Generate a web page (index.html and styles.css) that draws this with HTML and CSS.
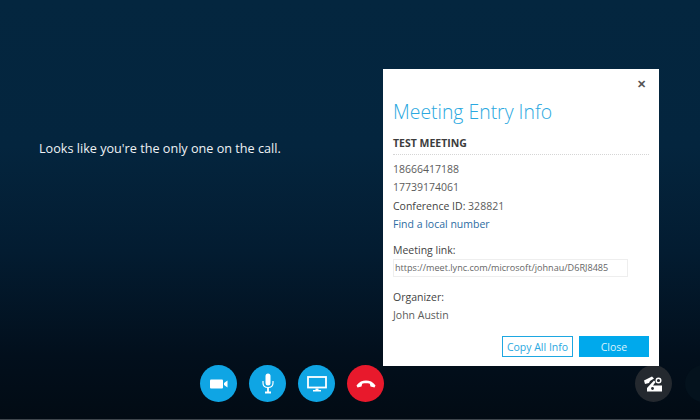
FILE: index.html
```html
<!DOCTYPE html>
<html lang="en">
<head>
    <meta charset="UTF-8">
    <title>Meeting Entry Info</title>
    <link rel="stylesheet" href="styles.css">
</head>
<body>

<div class="call-stage">
    <div class="call-main">
        <p class="call-message">Looks like you're the only one on the call.</p>
    </div>

    <div class="call-bar">
        <div class="call-controls">
            <button class="round-btn">
                <svg width="18" height="10" viewBox="0 0 18 10"><rect x="0" y="0.500" width="13" height="9" rx="1" fill="#fff"/><path d="M14 4 17.500 1.500V8.500L14 6Z" fill="#fff"/></svg>
            </button>
            <button class="round-btn">
                <svg width="12" height="21" viewBox="0 0 12 21"><rect x="3.500" y="0.500" width="5" height="12" rx="2.500" fill="#fff"/><path d="M1 8V10C1 13 3.200 14.500 6 14.500S11 13 11 10V8" fill="none" stroke="#fff" stroke-width="1.200"/><path d="M6 14.500V18.500M3 19.500H9" fill="none" stroke="#fff" stroke-width="1.800"/></svg>
            </button>
            <button class="round-btn">
                <svg width="20" height="16" viewBox="0 0 20 16"><rect x="1" y="1" width="18" height="10.500" fill="none" stroke="#fff" stroke-width="1.800"/><path d="M8.500 12.500H11.500V14H8.500ZM6 14H14V15.500H6Z" fill="#fff"/></svg>
            </button>
            <button class="round-btn hangup">
                <svg width="20" height="8" viewBox="0 0 20 8"><path d="M0.500 5.500C3 1.800 6.500 0.500 10 0.500S17 1.800 19.500 5.500L18.500 7.500 14.500 6.500 13.800 3.800C11.500 3.200 8.500 3.200 6.200 3.800L5.500 6.500 1.500 7.500Z" fill="#fff"/></svg>
            </button>
        </div>
        <button class="round-btn phone">
            <svg width="19" height="16" viewBox="0 0 19 16"><path d="M0 4.500 8 0.500 10 2.500 6 5 5 7 1 8Z" fill="#fff"/><path d="M3 15.500V12L10 4.500 11.500 6 9 9.500H18V15.500Z" fill="#fff"/><circle cx="8.500" cy="12.500" r="1.400" fill="#24292f"/><circle cx="14.500" cy="4.500" r="2.300" fill="none" stroke="#fff" stroke-width="1.400"/></svg>
        </button>
        <span class="round-btn ghost"></span>
    </div>

    <div class="info-panel">
        <div class="panel-top"><span class="panel-close">&#10005;</span></div>
        <h1 class="panel-title">Meeting Entry Info</h1>
        <h2 class="panel-subject">TEST MEETING</h2>
        <div class="panel-rows">
            <div class="panel-row">18666417188</div>
            <div class="panel-row">17739174061</div>
            <div class="panel-row"><span class="dark">Conference ID:</span> 328821</div>
            <a class="panel-row panel-link">Find a local number</a>
        </div>
        <div class="panel-label link-label">Meeting link:</div>
        <div class="link-box">https://meet.lync.com/microsoft/johnau/D6RJ8485</div>
        <div class="panel-label organizer-label">Organizer:</div>
        <div class="panel-row">John Austin</div>
        <div class="panel-actions">
            <button class="panel-btn outline">Copy All Info</button>
            <button class="panel-btn solid">Close</button>
        </div>
    </div>
</div>

</body>
</html>
```

FILE: styles.css
```css
html, body {
    margin: 0;
    height: 100%;
}
body {
    font-family: "Open Sans", "Noto Sans", Arial, sans-serif;
    overflow: hidden;
}
.call-stage {
    position: relative;
    width: 700px;
    height: 420px;
    box-sizing: border-box;
    border-bottom: 1px solid #40474e;
    overflow: hidden;
    display: flex;
    flex-direction: column;
    background: linear-gradient(180deg, #04263f 0%, #04253e 35%, #031c31 60%, #020f1c 85%, #020b14 100%);
}
.call-main {
    flex: 1;
    display: flex;
    align-items: center;
    padding-left: 39px;
    padding-bottom: 69px;
}
.call-message {
    margin: 0;
    color: #eef2f5;
    font-size: 12.650px;
}
.call-bar {
    position: relative;
    display: flex;
    align-items: flex-start;
    height: 55px;
    padding-left: 200px;
    box-sizing: border-box;
}
.call-controls {
    display: flex;
    flex-shrink: 0;
    gap: 12px;
    margin-top: 1px;
}
.round-btn {
    flex-shrink: 0;
    width: 37px;
    height: 37px;
    padding: 0;
    border: 0;
    border-radius: 50%;
    background-color: #0fa5e4;
    display: flex;
    justify-content: center;
    align-items: center;
}
.round-btn.hangup {
    background-color: #e8192c;
}
.round-btn.phone {
    margin-left: 251px;
    margin-top: 1px;
    background-color: #24292f;
}
.round-btn.ghost {
    margin-left: 13px;
    margin-top: 1px;
    background-color: #04121d;
}
.info-panel {
    position: absolute;
    left: 383px;
    top: 69px;
    width: 276px;
    height: 297px;
    box-sizing: border-box;
    padding: 0 10px;
    background-color: #fff;
    color: #5c5c5c;
    font-size: 10.500px;
}
.panel-top {
    display: flex;
    justify-content: flex-end;
    height: 30px;
    padding: 8px 3px 0 0;
    box-sizing: border-box;
}
.panel-close {
    color: #555;
    font-size: 11px;
    font-weight: 700;
    line-height: 14px;
}
.panel-title {
    margin: 0;
    color: #2aa8e0;
    font-size: 19.400px;
    font-weight: 300;
    line-height: 26px;
}
.panel-subject {
    margin: 10px 0 0;
    padding-bottom: 3px;
    border-bottom: 1px dotted #d5d5d5;
    color: #3c3c3c;
    font-size: 10.500px;
    font-weight: 700;
    line-height: 16px;
}
.panel-rows {
    margin-top: 5px;
}
.panel-row {
    display: block;
    height: 18.300px;
    line-height: 18.300px;
}
.dark {
    color: #444;
}
.panel-link {
    color: #2d6ca2;
}
.panel-label {
    color: #444;
    line-height: 18px;
}
.link-label {
    margin-top: 8px;
}
.link-box {
    width: 235px;
    height: 18px;
    box-sizing: border-box;
    padding-left: 1px;
    border: 1px solid #eee;
    font-size: 9.100px;
    line-height: 16px;
    color: #666;
    white-space: nowrap;
}
.organizer-label {
    margin-top: 11px;
}
.panel-actions {
    display: flex;
    justify-content: flex-end;
    gap: 6px;
    margin-top: 12px;
}
.panel-btn {
    width: 70px;
    height: 21px;
    padding: 0;
    box-sizing: border-box;
    font-family: inherit;
    font-size: 10.500px;
}
.panel-btn.outline {
    width: 71px;
    border: 1px solid #1ea7e1;
    background-color: #fff;
    color: #2aa8e0;
}
.panel-btn.solid {
    border: 0;
    background-color: #00a9ec;
    color: #d8f2fc;
}
```
